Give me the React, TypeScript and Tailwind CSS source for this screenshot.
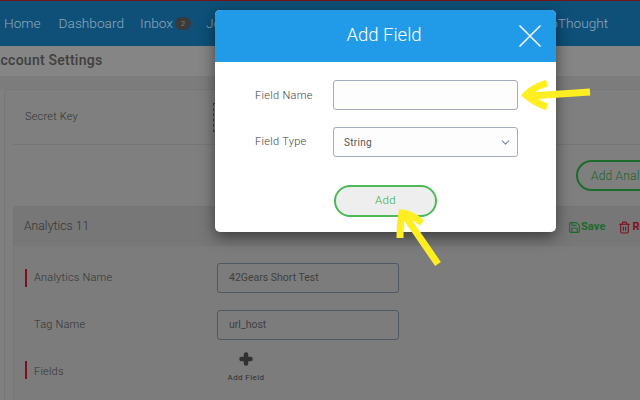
import { Save, Trash2, ChevronDown } from "lucide-react";

function Row({ label, mark, value }: { label: string; mark?: boolean; value: string }) {
  return (
    <div className="flex items-center h-[30px] mb-[17px]">
      <div className={`w-[2px] h-[18px] mr-[7px] ${mark ? "bg-[#7d0f1c]" : ""}`} />
      <div className="w-[183px] text-[11px] font-light tracking-[0.2px] text-[#333]">{label}</div>
      <div className="w-[182px] h-[30px] border border-[#4f5664] rounded-[3px] flex items-center pl-[11px] text-[10.5px] text-[#404040] whitespace-nowrap">
        {value}
      </div>
    </div>
  );
}

export default function App() {
  return (
    <div className="relative w-[640px] h-[400px] overflow-hidden bg-[#808080] font-['Roboto',sans-serif]">
      <div className="h-[46px] border-t-[1px] border-[#7a1414] bg-[#0e5078] flex items-center pl-[4px] text-[13.7px] font-light text-[#8fa9bb] whitespace-nowrap">
        <span>Home</span>
        <span className="ml-[18px]">Dashboard</span>
        <span className="ml-[16px]">Inbox</span>
        <span className="ml-[2px] w-[16px] h-[13px] rounded-full bg-[#3a3a3a] text-[8px] text-[#9a9a9a] flex items-center justify-center">2</span>
        <span className="ml-[15px]">Jobs</span>
        <span className="ml-[305px]">GoThought</span>
      </div>

      <div className="h-[30px] bg-[#858585] flex items-center pb-[1px] -ml-[9px] text-[14px] font-medium tracking-[0.25px] text-[#3f3f3f] whitespace-nowrap">
        Account Settings
      </div>

      <div className="h-[13px] bg-[#7c7c7c]" />

      <div className="ml-[4px] w-[700px] h-[320px] bg-[#7f7f7f] border-l border-t border-[#777] rounded-[3px]">
        <div className="h-[55px] mx-[8px] border-b border-[#767676] flex items-center pl-[12px] text-[11px] font-light tracking-[0.2px] text-[#333]">
          <span className="w-[188px]">Secret Key</span>
          <div className="w-[40px] h-[29px] border border-dashed border-[#444]" />
        </div>
        <div className="h-[61px] pl-[571px] pt-[15px]">
          <div className="w-[130px] h-[31px] border-2 border-[#1b6b2a] rounded-full flex items-center pl-[13px] text-[12px] font-light tracking-[0.2px] text-[#1c5f29] whitespace-nowrap">
            Add Analytics
          </div>
        </div>
        <div className="ml-[8px] h-[250px] bg-[#7c7c7c] border-l border-t border-[#757575] rounded-[3px]">
          <div className="h-[39px] bg-[#777777] flex items-center pl-[10px] pb-[2px] text-[12px] font-light tracking-[0.1px] text-[#333] relative">
            Analytics 11
            <div className="absolute left-[554px] top-[12px] flex items-center text-[11px] font-bold text-[#1c6b2a]">
              <Save size={13} strokeWidth={2} />
              <span className="ml-[0px]">Save</span>
              <Trash2 size={13} strokeWidth={2} className="ml-[13px] text-[#7d0f1c]" />
              <span className="ml-[1px] text-[#7d0f1c]">Remove</span>
            </div>
          </div>
          <div className="pt-[17px] pl-[11px]">
            <Row mark label="Analytics Name" value="42Gears Short Test" />
            <Row label="Tag Name" value="url_host" />
            <div className="flex items-start">
              <div className="w-[2px] h-[18px] mt-[4px] mr-[7px] bg-[#7d0f1c]" />
              <div className="w-[183px] text-[11px] font-light tracking-[0.2px] text-[#333] pt-[7px]">Fields</div>
              <div className="w-[58px] -mt-[5px] flex flex-col items-center text-[8px] tracking-[0.4px] text-[#2e2e2e]">
                <svg width="14" height="14" viewBox="0 0 14 14" fill="none" stroke="#303030" strokeWidth="4.5" strokeLinecap="round">
                  <path d="M7 2.5 V11.5 M2.5 7 H11.5" />
                </svg>
                <span className="mt-[6px]">Add Field</span>
              </div>
            </div>
          </div>
        </div>
      </div>

      {/* Modal */}
      <div className="absolute left-[215px] top-[10px] w-[341px] h-[222px] bg-white rounded-[5px] overflow-hidden shadow-[0_5px_15px_rgba(0,0,0,0.5)]">
        <div className="h-[52px] bg-[#219be8] flex items-center justify-center relative text-white text-[18.5px] font-light pr-[3px]">
          Add Field
          <svg className="absolute left-[304px] top-[15px]" width="22" height="22" viewBox="0 0 22 22" fill="none" stroke="#fff" strokeWidth="1.5">
            <path d="M0.5 0.5 L21.5 21.5 M21.5 0.5 L0.5 21.5" />
          </svg>
        </div>
        <div className="pl-[40px] pt-[18px]">
          <div className="flex items-center mb-[17px]">
            <div className="w-[78px] pt-[2px] text-[11px] font-light tracking-[0.3px] text-[#444]">Field Name</div>
            <div className="w-[185px] h-[30px] border border-[#a3abbd] rounded-[3px] bg-[#fdfdfd]" />
          </div>
          <div className="flex items-center">
            <div className="w-[78px] pt-[1px] text-[11px] font-light tracking-[0.3px] text-[#444]">Field Type</div>
            <div className="w-[185px] h-[30px] border border-[#a3abbd] rounded-[3px] bg-[#fdfdfd] flex items-center justify-between pl-[10px] pr-[5px] text-[10px] tracking-[0.3px] text-[#555]">
              String
              <ChevronDown size={13} strokeWidth={2} className="text-[#7a8699]" />
            </div>
          </div>
          <div className="ml-[79px] mt-[28px] w-[103px] h-[32px] border-2 border-[#4dba57] rounded-full bg-[#eeeeee] flex items-center justify-center text-[11.5px] font-light tracking-[0.3px] text-[#2fae3c]">
            Add
          </div>
        </div>
      </div>

      {/* Annotation arrows */}
      <svg className="absolute left-0 top-0 pointer-events-none" width="640" height="400" fill="none" stroke="#ffee22" strokeWidth="7">
        <path d="M590 92 Q560 94 530 96" />
        <path d="M547 83 Q532 88 526 95 Q534 102 547 107" />
        <path d="M438 264 L405 216" />
        <path d="M400 238 Q400 222 402 213 Q412 214 422 223" />
      </svg>
    </div>
  );
}
